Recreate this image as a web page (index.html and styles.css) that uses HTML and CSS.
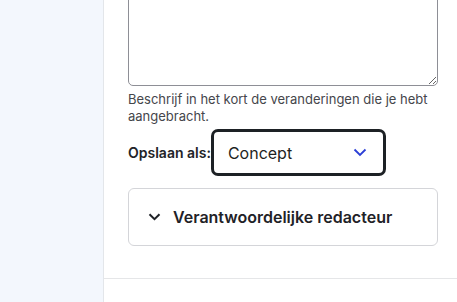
FILE: index.html
```html
<!DOCTYPE html>
<html>
   <head>
        <meta charset="UTF-8">
        <link rel="stylesheet" href="styles.css">
   </head>
   <body>
        <div class="layout">
            <aside class="sidebar"></aside>
            <main class="main">
                <div class="form">
                    <textarea class="log"></textarea>
                    <p class="hint">Beschrijf in het kort de veranderingen die je hebt aangebracht.</p>
                    <div class="state">
                        <label class="state-label">Opslaan als:</label>
                        <div class="select">
                            <span>Concept</span>
                            <svg width="14" height="9" viewBox="0 0 14 9"><path d="M1.5 1.5 L7 7 L12.5 1.5" fill="none" stroke="#2b3fd6" stroke-width="1.8"/></svg>
                        </div>
                    </div>
                    <div class="card">
                        <svg width="13" height="8" viewBox="0 0 13 8"><path d="M1.5 1.2 L6.5 6.2 L11.5 1.2" fill="none" stroke="#1f2227" stroke-width="2"/></svg>
                        <span>Verantwoordelijke redacteur</span>
                    </div>
                </div>
                <div class="divider"></div>
            </main>
        </div>
   </body>
</html>
```

FILE: styles.css
```css
html, body {
    margin: 0;
    height: 100%;
    overflow: hidden;
    font-family: Inter, "Noto Sans", sans-serif;
    background: #fff;
}

.layout {
    display: flex;
    height: 100%;
}

.sidebar {
    width: 103px;
    flex: none;
    background: #f3f7fd;
    border-right: 1px solid #e3e6ea;
}

.main {
    flex: 1;
}

.form {
    margin-top: -30px;
    padding: 0 19px 0 24px;
}

.log {
    display: block;
    box-sizing: border-box;
    width: 100%;
    height: 116px;
    margin: 0;
    border: 1px solid #8e8f96;
    border-radius: 5px;
    resize: vertical;
}

.hint {
    margin: 5px 0 0;
    font-size: 13px;
    line-height: 17px;
    color: #45464b;
}

.state {
    display: flex;
    align-items: center;
    gap: 0;
    margin-top: 4px;
}

.state-label {
    font-size: 14px;
    font-weight: 600;
    color: #222327;
}

.select {
    box-sizing: border-box;
    width: 175px;
    height: 47px;
    border: 3px solid #1d2125;
    border-radius: 7px;
    display: flex;
    align-items: center;
    justify-content: space-between;
    padding: 0 16px 0 14px;
    font-size: 16px;
    color: #1f1f22;
}

.card {
    box-sizing: border-box;
    margin-top: 12px;
    height: 58px;
    border: 1px solid #d4d5d9;
    border-radius: 6px;
    display: flex;
    align-items: center;
    gap: 12px;
    padding-left: 19px;
    font-size: 16px;
    font-weight: 600;
    color: #1f2227;
}

.divider {
    margin-top: 32px;
    border-top: 1px solid #e5e6e8;
}
```
